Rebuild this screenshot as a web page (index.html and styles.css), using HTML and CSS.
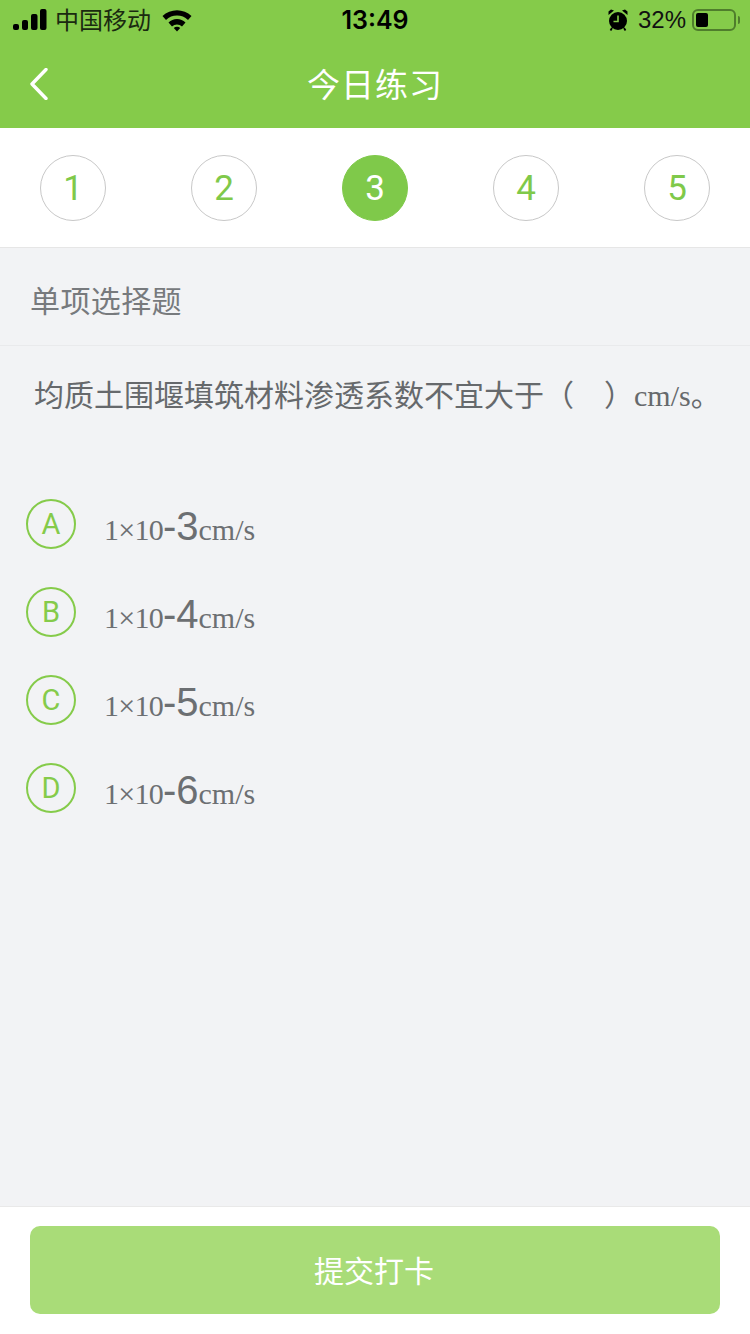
FILE: index.html
```html
<!DOCTYPE html>
<html lang="zh-CN">
<head>
    <meta charset="UTF-8">
    <meta name="viewport" content="width=device-width, initial-scale=1.0">
    <title>今日练习</title>
    <link rel="stylesheet" href="styles.css">
</head>
<body>

<div class="page">
    <div class="header">
        <div class="status-bar">
            <div class="status-left">
                <svg class="signal" width="34" height="22" viewBox="0 0 34 22">
                    <rect x="0" y="15" width="6" height="6" rx="2"/>
                    <rect x="9" y="11" width="6" height="10" rx="2"/>
                    <rect x="18" y="5" width="6.5" height="16" rx="2"/>
                    <rect x="27" y="0" width="6.5" height="21" rx="2"/>
                </svg>
                <span class="carrier">中国移动</span>
                <svg class="wifi" width="30" height="23" viewBox="0 0 30 23">
                    <path d="M0.5 7 A21 21 0 0 1 29.5 7 L26 11 A16 16 0 0 0 4 11 Z"/>
                    <path d="M6.5 13.5 A12 12 0 0 1 23.5 13.5 L20 17.5 A7 7 0 0 0 10 17.5 Z"/>
                    <path d="M11.8 19 A4.5 4.5 0 0 1 18.2 19 L15 22.5 Z"/>
                </svg>
            </div>
            <div class="status-time">13:49</div>
            <div class="status-right">
                <svg class="alarm" width="20" height="22" viewBox="0 0 20 22">
                    <circle cx="10" cy="12" r="9"/>
                    <path d="M0.5 6 L6 1.5 L3 0.5 L0.5 2.5 Z M19.5 6 L14 1.5 L17 0.5 L19.5 2.5 Z"/>
                    <path d="M4 19 L2.5 21.5 M16 19 L17.5 21.5" stroke="#000" stroke-width="1.8"/>
                    <path d="M10 6.5 V12.5 H5.5" fill="none" stroke="#85cb4a" stroke-width="1.6"/>
                </svg>
                <span class="battery-text">32%</span>
                <div class="battery"><div class="battery-level"></div></div>
                <div class="battery-cap"></div>
            </div>
        </div>
        <div class="nav-bar">
            <svg class="back" width="20" height="32" viewBox="0 0 20 32">
                <path d="M17 1.5 L3 16 L17 30.5" fill="none" stroke="#fff" stroke-width="3.4" stroke-linecap="round" stroke-linejoin="round"/>
            </svg>
            <div class="nav-title">今日练习</div>
        </div>
    </div>

    <div class="steps">
        <div class="step">1</div>
        <div class="step">2</div>
        <div class="step active">3</div>
        <div class="step">4</div>
        <div class="step">5</div>
    </div>

    <div class="main">
        <div class="section-title">单项选择题</div>
        <div class="question">
            <span>均质土围堰填筑材料渗透系数不宜大于（</span><span class="blank"></span><span>）</span><span class="serif">cm/s</span><span>。</span>
        </div>
        <div class="options">
            <div class="option">
                <div class="letter">A</div>
                <div class="option-text"><span class="serif base">1×10</span><span class="power">-3</span><span class="serif">cm/s</span></div>
            </div>
            <div class="option">
                <div class="letter">B</div>
                <div class="option-text"><span class="serif base">1×10</span><span class="power">-4</span><span class="serif">cm/s</span></div>
            </div>
            <div class="option">
                <div class="letter">C</div>
                <div class="option-text"><span class="serif base">1×10</span><span class="power">-5</span><span class="serif">cm/s</span></div>
            </div>
            <div class="option">
                <div class="letter">D</div>
                <div class="option-text"><span class="serif base">1×10</span><span class="power">-6</span><span class="serif">cm/s</span></div>
            </div>
        </div>
    </div>

    <div class="footer">
        <button class="submit-btn">提交打卡</button>
    </div>
</div>

</body>
</html>
```

FILE: styles.css
```css
body {
    margin: 0;
    padding: 0;
    background-color: #f2f3f5;
    font-family: "Liberation Sans", "Noto Sans CJK SC", sans-serif;
}
.page {
    height: 1334px;
    display: flex;
    flex-direction: column;
    overflow: hidden;
}
.header {
    background-color: #85cb4a;
    height: 128px;
}
.status-bar {
    height: 40px;
    display: flex;
    align-items: center;
    justify-content: space-between;
    padding: 0 10px 0 13px;
    position: relative;
    color: #000;
}
.status-left, .status-right {
    display: flex;
    align-items: center;
}
.carrier {
    font-size: 24px;
    margin-left: 8px;
    padding-bottom: 4px;
    color: #1a2a10;
}
.wifi {
    margin-left: 11px;
}
.status-time {
    position: absolute;
    left: 0;
    right: 0;
    text-align: center;
    font-family: Inter, sans-serif;
    font-size: 25px;
    font-weight: 600;
}
.alarm {
    margin-right: 10px;
}
.battery-text {
    font-size: 24px;
    color: #111;
    margin-right: 6px;
}
.battery {
    width: 44px;
    height: 22px;
    box-sizing: border-box;
    border: 2px solid #4f7d2c;
    border-radius: 6px;
    padding: 2px;
}
.battery-level {
    width: 12px;
    height: 14px;
    background: #000;
    border-radius: 2px;
}
.battery-cap {
    width: 2px;
    height: 8px;
    margin-left: 2px;
    background: #4f7d2c;
    border-radius: 0 2px 2px 0;
}
.nav-bar {
    height: 88px;
    position: relative;
    display: flex;
    align-items: center;
    justify-content: center;
}
.back {
    position: absolute;
    left: 29px;
    top: 28px;
}
.nav-title {
    color: #fff;
    font-size: 33px;
    letter-spacing: 1px;
    margin-top: -2px;
}
.steps {
    height: 120px;
    box-sizing: border-box;
    padding: 27px 40px 0;
    background: #fff;
    border-bottom: 1px solid #e6e6e6;
    display: flex;
    justify-content: space-between;
    align-items: flex-start;
}
.step {
    width: 66px;
    height: 66px;
    box-sizing: border-box;
    border: 1px solid #c8c8c8;
    border-radius: 50%;
    color: #7fc94a;
    font-family: Roboto, sans-serif;
    font-size: 35px;
    display: flex;
    align-items: center;
    justify-content: center;
}
.step.active {
    background: #7fc94a;
    border-color: #7fc94a;
    color: #fff;
}
.main {
    flex: 1;
}
.section-title {
    height: 98px;
    box-sizing: border-box;
    padding: 4px 0 0 30px;
    border-bottom: 1px solid #e9eaec;
    display: flex;
    align-items: center;
    font-size: 30px;
    letter-spacing: 0.4px;
    color: #777a7d;
}
.question {
    padding: 30px 0 0 34px;
    height: 40px;
    line-height: 40px;
    font-size: 30px;
    color: #66696c;
    white-space: nowrap;
    display: flex;
}
.blank {
    width: 30px;
}
.serif {
    font-family: "Liberation Serif", serif;
}
.base {
    letter-spacing: -0.75px;
}
.options {
    margin-top: 83px;
    padding-left: 26px;
}
.option {
    height: 88px;
    display: flex;
    align-items: flex-start;
}
.letter {
    width: 50px;
    height: 50px;
    box-sizing: border-box;
    border: 2px solid #85cb4a;
    border-radius: 50%;
    color: #85cb4a;
    font-family: Roboto, sans-serif;
    font-size: 29px;
    display: flex;
    align-items: center;
    justify-content: center;
}
.option-text {
    margin-left: 28px;
    margin-top: 2px;
    font-size: 30px;
    line-height: 50px;
    color: #6c6f72;
    white-space: nowrap;
}
.power {
    font-size: 40px;
}
.footer {
    height: 128px;
    box-sizing: border-box;
    padding: 19px 30px 0;
    background: #fff;
    border-top: 1px solid #e9e9e9;
}
.submit-btn {
    display: block;
    width: 100%;
    height: 88px;
    padding: 0 2px 2px 0;
    border: none;
    border-radius: 10px;
    background-color: #a9dc78;
    color: #fff;
    font-family: inherit;
    font-size: 30px;
}
```
